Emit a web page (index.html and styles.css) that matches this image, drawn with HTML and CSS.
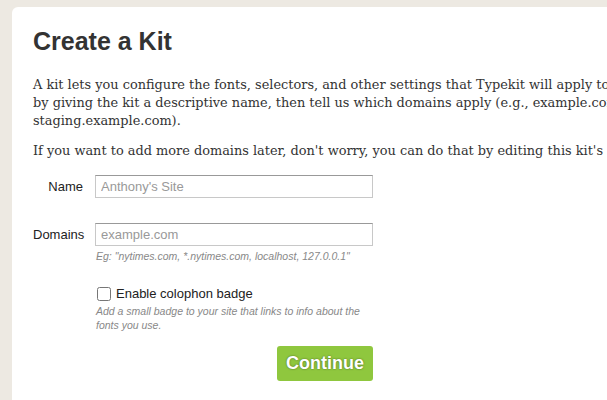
FILE: index.html
```html
<!DOCTYPE html>
<html lang="en">
<head>
    <meta charset="UTF-8">
    <title>Create a Kit</title>
    <link rel="stylesheet" href="styles.css">
</head>
<body>
    <div class="card">
        <h1>Create a Kit</h1>
        <p>A kit lets you configure the fonts, selectors, and other settings that Typekit will apply to your site. Start by giving the kit a descriptive name, then tell us which domains apply (e.g., example.com, staging.example.com).</p>
        <p>If you want to add more domains later, don't worry, you can do that by editing this kit's settings.</p>

        <form class="kit-form">
            <div class="row">
                <label for="kitName">Name</label>
                <div class="field">
                    <input type="text" id="kitName" placeholder="Anthony's Site">
                </div>
            </div>
            <div class="row domains-row">
                <label for="domains">Domains</label>
                <div class="field">
                    <input type="text" id="domains" placeholder="example.com">
                    <div class="hint">Eg: "nytimes.com, *.nytimes.com, localhost, 127.0.0.1"</div>
                </div>
            </div>
            <div class="row badge-row">
                <span class="spacer"></span>
                <div class="field">
                    <label class="check"><input type="checkbox"> Enable colophon badge</label>
                    <div class="hint">Add a small badge to your site that links to info about the fonts you use.</div>
                </div>
            </div>
            <div class="row">
                <span class="spacer"></span>
                <div class="field actions">
                    <button type="button">Continue</button>
                </div>
            </div>
        </form>
    </div>
</body>
</html>
```

FILE: styles.css
```css
html, body {
    margin: 0;
    background: #ede9e2;
    overflow: hidden;
}
.card {
    margin: 7px 0 0 12px;
    width: 900px;
    height: 500px;
    background: #fff;
    border-radius: 6px;
    padding: 19px 21px;
    box-sizing: border-box;
}
h1 {
    font-family: "Liberation Sans", Arial, sans-serif;
    font-size: 25px;
    font-weight: bold;
    color: #333;
    margin: 0 0 20px 0;
    line-height: 30px;
}
p {
    font-family: "DejaVu Serif", Georgia, serif;
    font-size: 12.9px;
    line-height: 18px;
    color: #333;
    margin: 0 0 12px 0;
    max-width: 688px;
}
.kit-form {
    margin-top: 15px;
    width: 340px;
    font-family: "Liberation Sans", Arial, sans-serif;
}
.row {
    display: flex;
    margin-bottom: 25px;
}
.domains-row {
    margin-bottom: 23px;
}
.badge-row {
    margin-bottom: 14px;
}
.row label,
.row .spacer {
    width: 50px;
    flex: none;
    text-align: right;
    padding-right: 12px;
    padding-top: 4px;
    font-size: 13px;
    color: #222;
}
.field {
    flex: 1;
}
.field input[type="text"] {
    width: 100%;
    box-sizing: border-box;
    height: 23px;
    border: 1px solid #c8c8c8;
    border-top-color: #999;
    font-family: "Liberation Sans", Arial, sans-serif;
    font-size: 13px;
    padding: 2px 5px;
    margin: 0;
}
.field input::placeholder {
    color: #999;
}
.hint {
    font-size: 10.5px;
    font-style: italic;
    color: #888;
    margin-top: 3px;
    padding-left: 1px;
    line-height: 14px;
}
.row .check {
    width: auto;
    text-align: left;
    padding: 0;
    display: flex;
    align-items: center;
    gap: 5px;
    font-size: 13px;
    color: #222;
}
.check input {
    margin: 0 0 0 2px;
    width: 14px;
    height: 14px;
}
.actions {
    display: flex;
    justify-content: flex-end;
}
button {
    background: #8fc73e;
    border: none;
    border-radius: 3px;
    color: #fff;
    font-family: "Liberation Sans", Arial, sans-serif;
    font-weight: bold;
    font-size: 18px;
    padding: 7px 9px;
    text-shadow: 0 0 2px rgba(0, 0, 0, 0.5);
}
```
